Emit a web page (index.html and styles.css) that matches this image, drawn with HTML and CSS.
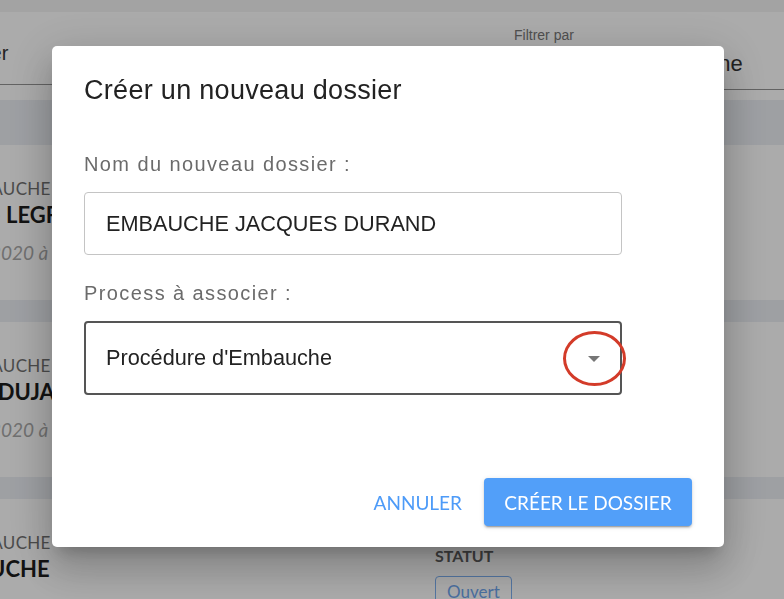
FILE: index.html
```html
<!DOCTYPE html>
<html lang="fr">
<head>
    <meta charset="UTF-8">
    <meta name="viewport" content="width=device-width, initial-scale=1.0">
    <title>Dossiers</title>
    <link rel="stylesheet" href="styles.css">
</head>
<body>
    <!-- Page behind the dialog -->
    <div class="page">
        <div class="topbar"></div>

        <div class="filters">
            <div class="field field-search">
                <div class="field-value">Rechercher</div>
            </div>
            <div class="field field-filter">
                <div class="field-label">Filtrer par</div>
                <div class="field-value">Dossiers de la semaine</div>
            </div>
        </div>

        <div class="list">
            <div class="card">
                <div class="card-main">
                    <div class="card-type">Embauche</div>
                    <div class="card-name">JO - LEGRAND</div>
                    <div class="card-date">12/2020 à 10h30</div>
                </div>
            </div>
            <div class="card">
                <div class="card-main">
                    <div class="card-type">Embauche</div>
                    <div class="card-name">LIA DUJARDIN</div>
                    <div class="card-date">12/2020 à 11h15</div>
                </div>
            </div>
            <div class="card">
                <div class="card-main">
                    <div class="card-type">Embauche</div>
                    <div class="card-name">BAUCHE</div>
                </div>
                <div class="card-status">
                    <div class="status-label">Statut</div>
                    <span class="status-chip">Ouvert</span>
                </div>
            </div>
        </div>
    </div>

    <div class="backdrop"></div>

    <!-- New folder dialog -->
    <div class="dialog">
        <h2 class="dialog-title">Créer un nouveau dossier</h2>

        <div class="form-label">Nom du nouveau dossier :</div>
        <div class="text-input">EMBAUCHE JACQUES DURAND</div>

        <div class="form-label form-label-second">Process à associer :</div>
        <div class="select">
            <span>Procédure d'Embauche</span>
            <svg class="select-arrow" width="12" height="6" viewBox="0 0 12 6">
                <path d="M0 0 L12 0 L6 6 Z" fill="#767676"/>
            </svg>
            <span class="highlight-ring"></span>
        </div>

        <div class="dialog-actions">
            <button class="btn-text">Annuler</button>
            <button class="btn-primary">Créer le dossier</button>
        </div>
    </div>
</body>
</html>
```

FILE: styles.css
```css
body {
    margin: 0;
    padding: 0;
    font-family: 'Lato', 'Liberation Sans', sans-serif;
    background-color: #eceff4;
    overflow: hidden;
}

/* Page behind */
.page {
    width: 784px;
    height: 599px;
    overflow: hidden;
}

.topbar {
    height: 12px;
    background-color: #f3f3f3;
}

.filters {
    height: 88px;
    background-color: #fff;
    display: flex;
    align-items: flex-start;
}

.field {
    flex-shrink: 0;
    font-family: 'Liberation Sans', Arial, sans-serif;
    border-bottom: 1px solid #949494;
    box-sizing: border-box;
}

.field-search {
    width: 420px;
    height: 73px;
    margin-left: -95px;
    padding-top: 28px;
}

.field-filter {
    width: 300px;
    height: 78px;
    margin-left: 189px;
    padding-top: 14px;
}

.field-label {
    font-size: 14px;
    color: #777;
    line-height: 18px;
}

.field-value {
    font-size: 20px;
    color: #333;
    line-height: 26px;
}

.field-filter .field-value {
    font-size: 22px;
    margin-top: 7px;
}

.list {
    margin-top: 45px;
    display: flex;
    flex-direction: column;
    gap: 22px;
}

.card {
    background-color: #fff;
    height: 155px;
    display: flex;
    box-sizing: border-box;
    padding-top: 33px;
}

.card-main {
    width: 475px;
    margin-left: -40px;
}

.card-type {
    font-size: 17px;
    line-height: 21px;
    letter-spacing: 0.3px;
    text-indent: -6px;
    text-transform: uppercase;
    color: #707070;
}

.card-name {
    font-size: 22px;
    line-height: 28px;
    font-weight: 700;
    color: #1c1c1c;
    margin-top: 2px;
}

.card-date {
    font-size: 19px;
    line-height: 24px;
    font-style: italic;
    color: #a8a8a8;
    margin-top: 12px;
}

.card-status {
    margin-top: 14px;
}

.status-label {
    font-size: 16px;
    line-height: 20px;
    font-weight: 700;
    text-transform: uppercase;
    color: #606060;
}

.status-chip {
    display: inline-block;
    margin-top: 10px;
    padding: 4px 11px;
    border: 1px solid #7db0f2;
    border-radius: 4px;
    color: #6fa6ee;
    font-size: 17px;
}

.backdrop {
    position: fixed;
    top: 0;
    left: 0;
    right: 0;
    bottom: 0;
    background-color: rgba(0, 0, 0, 0.33);
}

/* Dialog */
.dialog {
    position: fixed;
    left: 52px;
    top: 46px;
    width: 672px;
    height: 501px;
    box-sizing: border-box;
    padding: 29px 32px 21px;
    background-color: #fff;
    border-radius: 5px;
    display: flex;
    flex-direction: column;
    font-family: 'Liberation Sans', Arial, sans-serif;
    box-shadow: 0 11px 15px -7px rgba(0, 0, 0, 0.2), 0 24px 38px 3px rgba(0, 0, 0, 0.14), 0 9px 46px 8px rgba(0, 0, 0, 0.12);
}

.dialog-title {
    margin: 0;
    font-size: 27px;
    line-height: 30px;
    font-weight: 400;
    letter-spacing: 0.3px;
    color: #222;
}

.form-label {
    margin-top: 47px;
    font-size: 20px;
    line-height: 24px;
    letter-spacing: 1.4px;
    color: #6b6b6b;
}

.form-label-second {
    margin-top: 26px;
}

.text-input,
.select {
    width: 538px;
    box-sizing: border-box;
    margin-top: 16px;
    border-radius: 4px;
    display: flex;
    align-items: center;
    font-size: 21.7px;
    color: #222;
}

.text-input {
    height: 63px;
    border: 1px solid #c4c4c4;
    padding-left: 21px;
}

.select {
    position: relative;
    height: 74px;
    border: 2px solid #555;
    padding-left: 20px;
    padding-right: 20px;
    justify-content: space-between;
}

.select-arrow {
    margin-top: 1px;
}

/* red annotation circle */
.highlight-ring {
    position: absolute;
    left: 477px;
    top: 8px;
    width: 63px;
    height: 55px;
    box-sizing: border-box;
    border: 3px solid #d33b29;
    border-radius: 50%;
}

.dialog-actions {
    margin-top: auto;
    display: flex;
    justify-content: flex-end;
    align-items: center;
}

.btn-text,
.btn-primary {
    font-family: 'Lato', sans-serif;
    font-size: 19px;
    text-transform: uppercase;
    border: none;
    border-radius: 4px;
    cursor: pointer;
}

.btn-text {
    background: none;
    color: #4d9bf8;
    padding: 8px 11px;
    margin-right: 11px;
}

.btn-primary {
    width: 208px;
    height: 48px;
    background-color: #529ff9;
    color: #fff;
    box-shadow: 0 3px 1px -2px rgba(0, 0, 0, 0.2), 0 2px 2px 0 rgba(0, 0, 0, 0.14), 0 1px 5px 0 rgba(0, 0, 0, 0.12);
}
```
